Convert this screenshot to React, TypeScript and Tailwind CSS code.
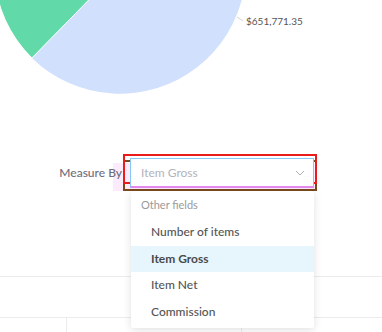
import React from 'react';

const fields = ['Number of items', 'Item Gross', 'Item Net', 'Commission'];

const PieChart = () => (
  <svg width="382" height="154" viewBox="0 0 382 154" className="block">
    <path d="M120 -32 L229.1 -95 A126 126 0 0 1 31.9 58 Z" fill="#d1e0fc" />
    <path d="M120 -32 L31.9 58 A126 126 0 0 1 23.5 -113 Z" fill="#62d9a8" stroke="#ffffff" strokeWidth="1" />
    <line x1="237" y1="17" x2="243" y2="21" stroke="#d6d6d6" strokeWidth="1" />
    <text x="246" y="25" fontSize="10" fill="#555555" fontFamily="Lato, sans-serif">
      $651,771.35
    </text>
  </svg>
);

const App = () => {
  const selected = 'Item Gross';

  return (
    <div className="relative w-[382px] h-[332px] overflow-hidden bg-white" style={{ fontFamily: 'Lato, "Noto Sans", sans-serif' }}>
      <PieChart />

      <div className="relative flex items-start h-[37px]">
        <div className="absolute left-[113px] w-[204px] top-[9px] bottom-0 bg-[#fcebfc]" />
        <div className="relative z-10 w-[123px] flex justify-end pt-[11px] pr-[1px]">
          <span className="text-[12px] font-medium text-[#6f6e7d] leading-[16px]">Measure By</span>
        </div>

        <div className="relative w-[194px] h-[37px]">
          <div className="absolute inset-x-0 top-[6px] bottom-0 border-2 border-[#7a4a1e]" />
          <div className="absolute inset-x-0 top-0 h-[30px] border-2 border-[#ea1b1b]" />

          <div className="relative mt-[4px] ml-[7px] mr-[3px] h-[30px] bg-white border border-[#86c9f2] border-b-2 border-b-[#e78af0] flex items-center justify-between pl-[10px] pr-[8px]">
            <span className="text-[12px] text-[#b3b3bb]">Item Gross</span>
            <svg width="10" height="6" viewBox="0 0 10 6">
              <path d="M1 1 L5 5 L9 1" fill="none" stroke="#b0b0b6" strokeWidth="1" />
            </svg>
          </div>
        </div>
      </div>

      <div className="h-[85px]" />
      <div className="h-[41px] border-t border-[#ececec]" />
      <div className="grid grid-cols-[67px_175px_1fr] h-[15px] border-t border-[#ececec]">
        <div className="border-r border-[#ececec]" />
        <div className="border-r border-[#ececec]" />
        <div />
      </div>

      <div className="absolute left-[131px] top-[191px] w-[183px] h-[137px] bg-white shadow-[0_2px_8px_rgba(0,0,0,0.12)] rounded-[2px]">
        <div className="h-[28px] flex items-center pl-[10px]">
          <span className="text-[11px] text-[#9a9a9a]">Other fields</span>
        </div>
        {fields.map((f) => (
          <div
            key={f}
            className={
              f === selected
                ? 'h-[26.5px] flex items-center pl-[20px] bg-[#e7f5fd] text-[12px] font-bold text-[#4a4a4a]'
                : 'h-[26.5px] flex items-center pl-[20px] text-[12px] font-medium text-[#555555]'
            }
          >
            {f}
          </div>
        ))}
      </div>
    </div>
  );
};

export default App;
